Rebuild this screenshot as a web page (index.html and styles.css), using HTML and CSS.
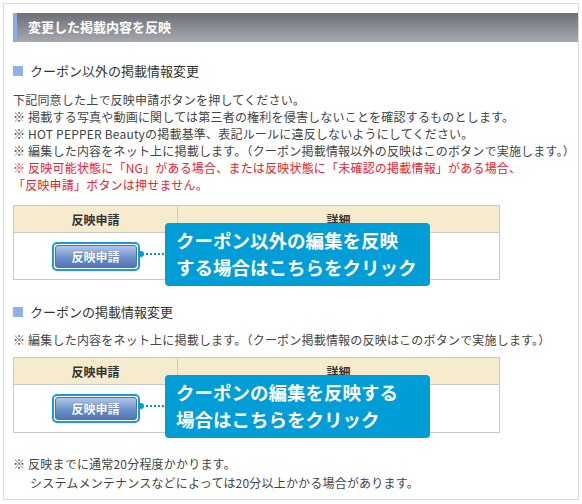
FILE: index.html
```html
<!DOCTYPE html>
<html lang="ja">
<head>
<meta charset="utf-8">
<link rel="stylesheet" href="styles.css">
</head>
<body>
<div class="frame">
  <h1 class="bar">変更した掲載内容を反映</h1>
  <div class="content">
    <h2 class="sec">クーポン以外の掲載情報変更</h2>
    <p class="txt">下記同意した上で反映申請ボタンを押してください。<br>
    ※ 掲載する写真や動画に関しては第三者の権利を侵害しないことを確認するものとします。<br>
    ※ HOT PEPPER Beautyの掲載基準、表記ルールに違反しないようにしてください。<br>
    ※ 編集した内容をネット上に掲載します。（クーポン掲載情報以外の反映はこのボタンで実施します。）<br>
    <span class="red">※ 反映可能状態に「NG」がある場合、または反映状態に「未確認の掲載情報」がある場合、<br>「反映申請」ボタンは押せません。</span></p>
    <div class="twrap t1">
      <table class="tbl">
        <tr><th class="c1">反映申請</th><th class="c2">詳細</th></tr>
        <tr class="body1"><td class="c1"><span class="btn"><span class="btn-in">反映申請</span></span></td><td class="c2"></td></tr>
      </table>
      <div class="callout">クーポン以外の編集を反映<br>する場合はこちらをクリック</div>
    </div>

    <h2 class="sec sec2">クーポンの掲載情報変更</h2>
    <p class="txt txt2">※ 編集した内容をネット上に掲載します。（クーポン掲載情報の反映はこのボタンで実施します。）</p>
    <div class="twrap t2">
      <table class="tbl">
        <tr><th class="c1">反映申請</th><th class="c2">詳細</th></tr>
        <tr class="body2"><td class="c1"><span class="btn"><span class="btn-in">反映申請</span></span></td><td class="c2"></td></tr>
      </table>
      <div class="callout">クーポンの編集を反映する<br>場合はこちらをクリック</div>
    </div>

    <p class="note">※ 反映までに通常20分程度かかります。<br><span class="ind">システムメンテナンスなどによっては20分以上かかる場合があります。</span></p>
  </div>
</div>
</body>
</html>
```
FILE: styles.css
```css
html, body {
  margin: 0;
  padding: 0;
  background: #fff;
}
body {
  font-family: "Noto Sans CJK JP", "Noto Sans", sans-serif;
  color: #444;
}
.frame {
  margin: 3px;
  border: 1px solid #dcdcdc;
  padding: 9px 0 8px 9px;
  height: 497px;
  box-sizing: border-box;
}
.bar {
  margin: 0;
  height: 29px;
  line-height: 28px;
  border-left: 4px solid #86aee0;
  padding-left: 11px;
  background: linear-gradient(#6c7076, #a6a9ad);
  color: #fff;
  font-size: 13px;
  font-weight: bold;
}
.content {
  padding-right: 8px;
}
.sec {
  margin: 19px 0 0;
  display: flex;
  align-items: center;
  gap: 7px;
  font-size: 13px;
  font-weight: normal;
  line-height: 20px;
  color: #333;
}
.sec::before {
  content: "";
  width: 10px;
  height: 10px;
  background: #8cb4e2;
}
.sec2 {
  margin-top: 22px;
}
.txt {
  margin: 10px 0 0;
  font-size: 12px;
  line-height: 17px;
  letter-spacing: 0.2px;
  white-space: nowrap;
}
.txt2 {
  margin-top: 9px;
}
.red {
  color: #e8222e;
}
.twrap {
  position: relative;
  width: 487px;
  margin-top: 12px;
}
.t2 {
  margin-top: 9px;
}
.tbl {
  width: 487px;
  border-collapse: collapse;
  font-size: 12px;
}
.tbl th, .tbl td {
  border: 1px solid #c9c9c9;
  padding: 0;
  text-align: center;
}
.tbl th {
  background: #f6ebcd;
  color: #333;
  font-weight: bold;
  height: 26px;
}
.tbl .c1 { width: 163px; }
.body1 td { height: 46px; }
.body2 td { height: 47px; }
.btn {
  display: inline-block;
  vertical-align: middle;
  width: 88px;
  height: 29px;
  box-sizing: border-box;
  border: 2px solid #189bd6;
  border-radius: 5px;
  padding: 1px;
  background: #fff;
}
.btn-in {
  display: block;
  height: 100%;
  box-sizing: border-box;
  border: 1px solid #4f72ad;
  border-radius: 3px;
  background: linear-gradient(#b1c6ea, #6f92cc 55%, #4f76b8);
  color: #fff;
  font-weight: bold;
  font-size: 12px;
  line-height: 21px;
  text-shadow: 0 0 1px #3e5f98;
}
.callout {
  position: absolute;
  left: 152px;
  top: 18px;
  width: 265px;
  height: 63px;
  box-sizing: border-box;
  padding: 4px 0 0 11px;
  background: #009dd7;
  border-radius: 4px;
  color: #fff;
  font-size: 18.5px;
  font-weight: bold;
  line-height: 27px;
  white-space: nowrap;
}
.callout::before {
  content: "";
  position: absolute;
  left: -23px;
  top: 30px;
  width: 22px;
  border-top: 2px dotted #009dd7;
}
.callout::after {
  content: "";
  position: absolute;
  left: -27px;
  top: 28px;
  width: 6px;
  height: 6px;
  border-radius: 50%;
  background: #009dd7;
}
.note {
  margin: 21px 0 0;
  font-size: 12px;
  line-height: 19px;
  letter-spacing: 0.2px;
  white-space: nowrap;
}
.ind {
  padding-left: 17px;
}
```
